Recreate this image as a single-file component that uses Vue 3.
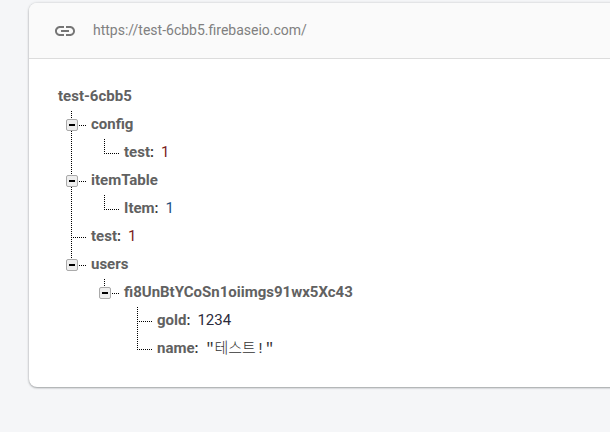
<script setup>
import { computed, ref } from 'vue'

const databaseUrl = 'https://test-6cbb5.firebaseio.com/'

const root = {
  key: 'test-6cbb5',
  children: [
    { key: 'config', children: [{ key: 'test', value: 1, tone: 'red' }] },
    { key: 'itemTable', children: [{ key: 'Item', value: 1, tone: 'blue' }] },
    { key: 'test', value: 1, tone: 'red' },
    {
      key: 'users',
      children: [
        {
          key: 'fi8UnBtYCoSn1oiimgs91wx5Xc43',
          children: [
            { key: 'gold', value: 1234, tone: 'ink' },
            { key: 'name', value: '테스트!', tone: 'text' },
          ],
        },
      ],
    },
  ],
}

const collapsed = ref(new Set())

function toggle(path) {
  const next = new Set(collapsed.value)
  if (next.has(path)) next.delete(path)
  else next.add(path)
  collapsed.value = next
}

// Flattens the tree into rows; each row lists the guide cells left of its key.
function flatten(node, path, outer, guides, rows) {
  rows.push({ node, path, guides })
  if (!node.children || collapsed.value.has(path)) return rows
  node.children.forEach((child, i) => {
    const last = i === node.children.length - 1
    const own = last ? 'end' : 'branch'
    flatten(child, path + '/' + child.key, [...outer, last ? 'blank' : 'line'], [...outer, own], rows)
  })
  return rows
}

const rows = computed(() => flatten(root, root.key, [], [], []))
</script>

<template>
  <main class="card">
    <header class="bar">
      <svg class="link-icon" viewBox="0 0 24 24" aria-hidden="true">
        <path
          d="M3.9 12c0-1.71 1.39-3.1 3.1-3.1h4V7H7c-2.76 0-5 2.24-5 5s2.24 5 5 5h4v-1.9H7c-1.71 0-3.1-1.39-3.1-3.1zM8 13h8v-2H8v2zm9-6h-4v1.9h4c1.71 0 3.1 1.39 3.1 3.1s-1.39 3.1-3.1 3.1h-4V17h4c2.76 0 5-2.24 5-5s-2.24-5-5-5z"
        />
      </svg>
      <a class="url" :href="databaseUrl">{{ databaseUrl }}</a>
    </header>

    <ul class="tree">
      <li v-for="row in rows" :key="row.path" class="row">
        <span v-for="(guide, i) in row.guides" :key="i" class="cell">
          <svg class="guide" viewBox="0 0 33 28" aria-hidden="true">
            <path v-if="guide === 'line' || guide === 'branch'" d="M13.5 1V29" />
            <path v-if="guide === 'end'" d="M13.5 1V16" />
            <path v-if="guide === 'branch' || guide === 'end'" d="M13 15.5H28" />
          </svg>
          <button
            v-if="row.node.children && i === row.guides.length - 1"
            class="toggle"
            type="button"
            :aria-expanded="!collapsed.has(row.path)"
            :aria-label="row.node.key"
            @click="toggle(row.path)"
          >
            <svg class="sign" viewBox="0 0 10 10" aria-hidden="true">
              <path d="M2 4h6v2H2z" />
              <path v-if="collapsed.has(row.path)" d="M4 2h2v6H4z" />
            </svg>
          </button>
        </span>
        <span class="key">{{ row.node.key }}</span>
        <template v-if="!row.node.children">
          <span class="colon">:</span>
          <span class="value" :class="row.node.tone">{{ JSON.stringify(row.node.value) }}</span>
        </template>
      </li>
    </ul>
  </main>
</template>

<style>
body {
  margin: 0;
  background: #f5f6f8;
}
</style>

<style scoped>
.card {
  margin: 3px -12px 45px 29px;
  border-radius: 8px;
  overflow: hidden;
  background: #fff;
  box-shadow: 0 1px 2px rgba(60, 64, 67, 0.4), 0 0 3px rgba(60, 64, 67, 0.2);
  font-family: Roboto, "Noto Sans CJK KR", sans-serif;
}

.bar {
  display: flex;
  align-items: center;
  gap: 16px;
  height: 55px;
  padding: 0 24px;
  border-bottom: 1px solid #dcdcdc;
  background: #fafafa;
}

.link-icon {
  width: 24px;
  height: 24px;
  fill: #757575;
}

.url {
  padding-bottom: 2px;
  color: #808080;
  font-size: 14px;
  line-height: 20px;
  text-decoration: none;
}

.tree {
  margin: 0;
  padding: 23px 29px 25px;
  list-style: none;
  font-size: 15px;
  line-height: 28px;
}

.row {
  display: flex;
  height: 28px;
  white-space: nowrap;
}

.cell {
  display: grid;
  width: 33px;
  height: 28px;
}

.guide {
  grid-area: 1 / 1;
  width: 33px;
  height: 28px;
  fill: none;
  stroke: #000;
  stroke-dasharray: 1 1;
  shape-rendering: crispEdges;
}

.toggle {
  grid-area: 1 / 1;
  display: flex;
  width: 12px;
  height: 12px;
  margin: 9px 0 0 8px;
  padding: 0;
  border: 1px solid #aaa;
  border-radius: 2px;
  background: #eee;
  cursor: pointer;
}

.sign {
  width: 10px;
  height: 10px;
  shape-rendering: crispEdges;
}

.key {
  color: #616161;
  font-weight: 700;
}

.colon {
  margin-right: 7px;
  color: #333;
  font-weight: 500;
}

.value {
  font-weight: 400;
}

.ink {
  color: #2c2c3c;
}

.red {
  color: #7a2222;
}

.blue {
  color: #1f4f7f;
}

.text {
  color: #333;
  font-family: "Liberation Mono", "Noto Sans CJK KR", monospace;
  font-weight: 300;
  line-height: 32px;
}
</style>
